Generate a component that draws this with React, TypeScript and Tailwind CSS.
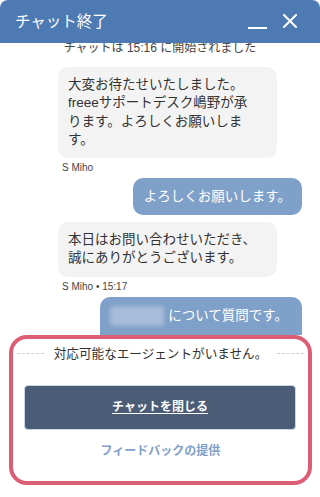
const jp = { fontFamily: '"Liberation Sans", "Noto Sans CJK JP", sans-serif' };

const AgentBubble = ({ lines }: { lines: string[] }) => (
  <div className="ml-[58px] w-[219px] rounded-[10px] bg-[#f3f3f3] pl-[10px] pr-[12px] py-[9px] text-[13.5px] leading-[18.3px] text-[#333]">
    {lines.map((l, i) => (
      <div key={i} className="whitespace-nowrap">{l}</div>
    ))}
  </div>
);

const Name = ({ children }: { children: string }) => (
  <div className="ml-[62px] mt-[3px] text-[10px] leading-[14px] text-[#444]">{children}</div>
);

export default function App() {
  return (
    <div className="flex h-[497px] w-[320px] flex-col overflow-hidden bg-white" style={jp}>
      <header className="flex h-[43px] shrink-0 items-center rounded-t-[8px] bg-[#4e7ab4] pl-[15px] pr-[23px]">
        <h1 className="text-[15.5px] font-normal text-white">チャット終了</h1>
        <div className="ml-auto mt-[12px] h-[2px] w-[19px] bg-white" />
        <svg className="ml-[16px] mt-[-2px]" width="14" height="14" viewBox="0 0 14 14">
          <path d="M1 1L13 13M13 1L1 13" stroke="white" strokeWidth="2" strokeLinecap="square" />
        </svg>
      </header>

      <div className="flex flex-col overflow-hidden">
        <p className="-mt-[3px] text-center text-[12px] leading-[16px] text-[#444]">
          チャットは 15:16 に開始されました
        </p>

        <div className="mt-[11px]">
          <AgentBubble
            lines={['大変お待たせいたしました。', 'freeeサポートデスク嶋野が承', 'ります。よろしくお願いしま', 'す。']}
          />
        </div>
        <Name>S Miho</Name>

        <div className="mr-[18px] mt-[3px] self-end rounded-[10px] bg-[#7fa0c8] px-[11px] py-[9px] text-[13.5px] leading-[19px] text-white">
          よろしくお願いします。
        </div>

        <div className="mt-[7px]">
          <AgentBubble lines={['本日はお問い合わせいただき、', '誠にありがとうございます。']} />
        </div>
        <Name>S Miho • 15:17</Name>

        <div className="mr-[18px] mt-[3px] flex items-center self-end rounded-t-[10px] bg-[#7fa0c8] pl-[10px] pr-[14px] py-[9px] text-[13.5px] leading-[19px] text-white">
          <span className="mr-[4px] h-[20px] w-[54px] rounded-[3px] bg-[#a7bcda] blur-[2px]" />
          について質問です。
        </div>
      </div>

      <div className="ml-[9px] mr-[8px] flex h-[150px] shrink-0 flex-col rounded-[18px] border-[4px] border-[#dc5e75] bg-white">
        <div className="flex items-center px-[4px] pt-[6px]">
          <div className="flex-1 border-t border-dashed border-[#cfcfcf]" />
          <span className="mx-[10px] text-[12.6px] leading-[18px] text-[#333]">対応可能なエージェントがいません。</span>
          <div className="flex-1 border-t border-dashed border-[#cfcfcf]" />
        </div>
        <button className="ml-[11px] mr-[12px] mt-[22px] h-[45px] rounded-[4px] border border-[#c9d5e8] bg-[#4b5c77] text-[12px] font-bold text-white underline underline-offset-2">
          チャットを閉じる
        </button>
        <div className="mt-[12px] text-center text-[12px] font-bold leading-[18px] text-[#7fa0c8]">
          フィードバックの提供
        </div>
      </div>
    </div>
  );
}
